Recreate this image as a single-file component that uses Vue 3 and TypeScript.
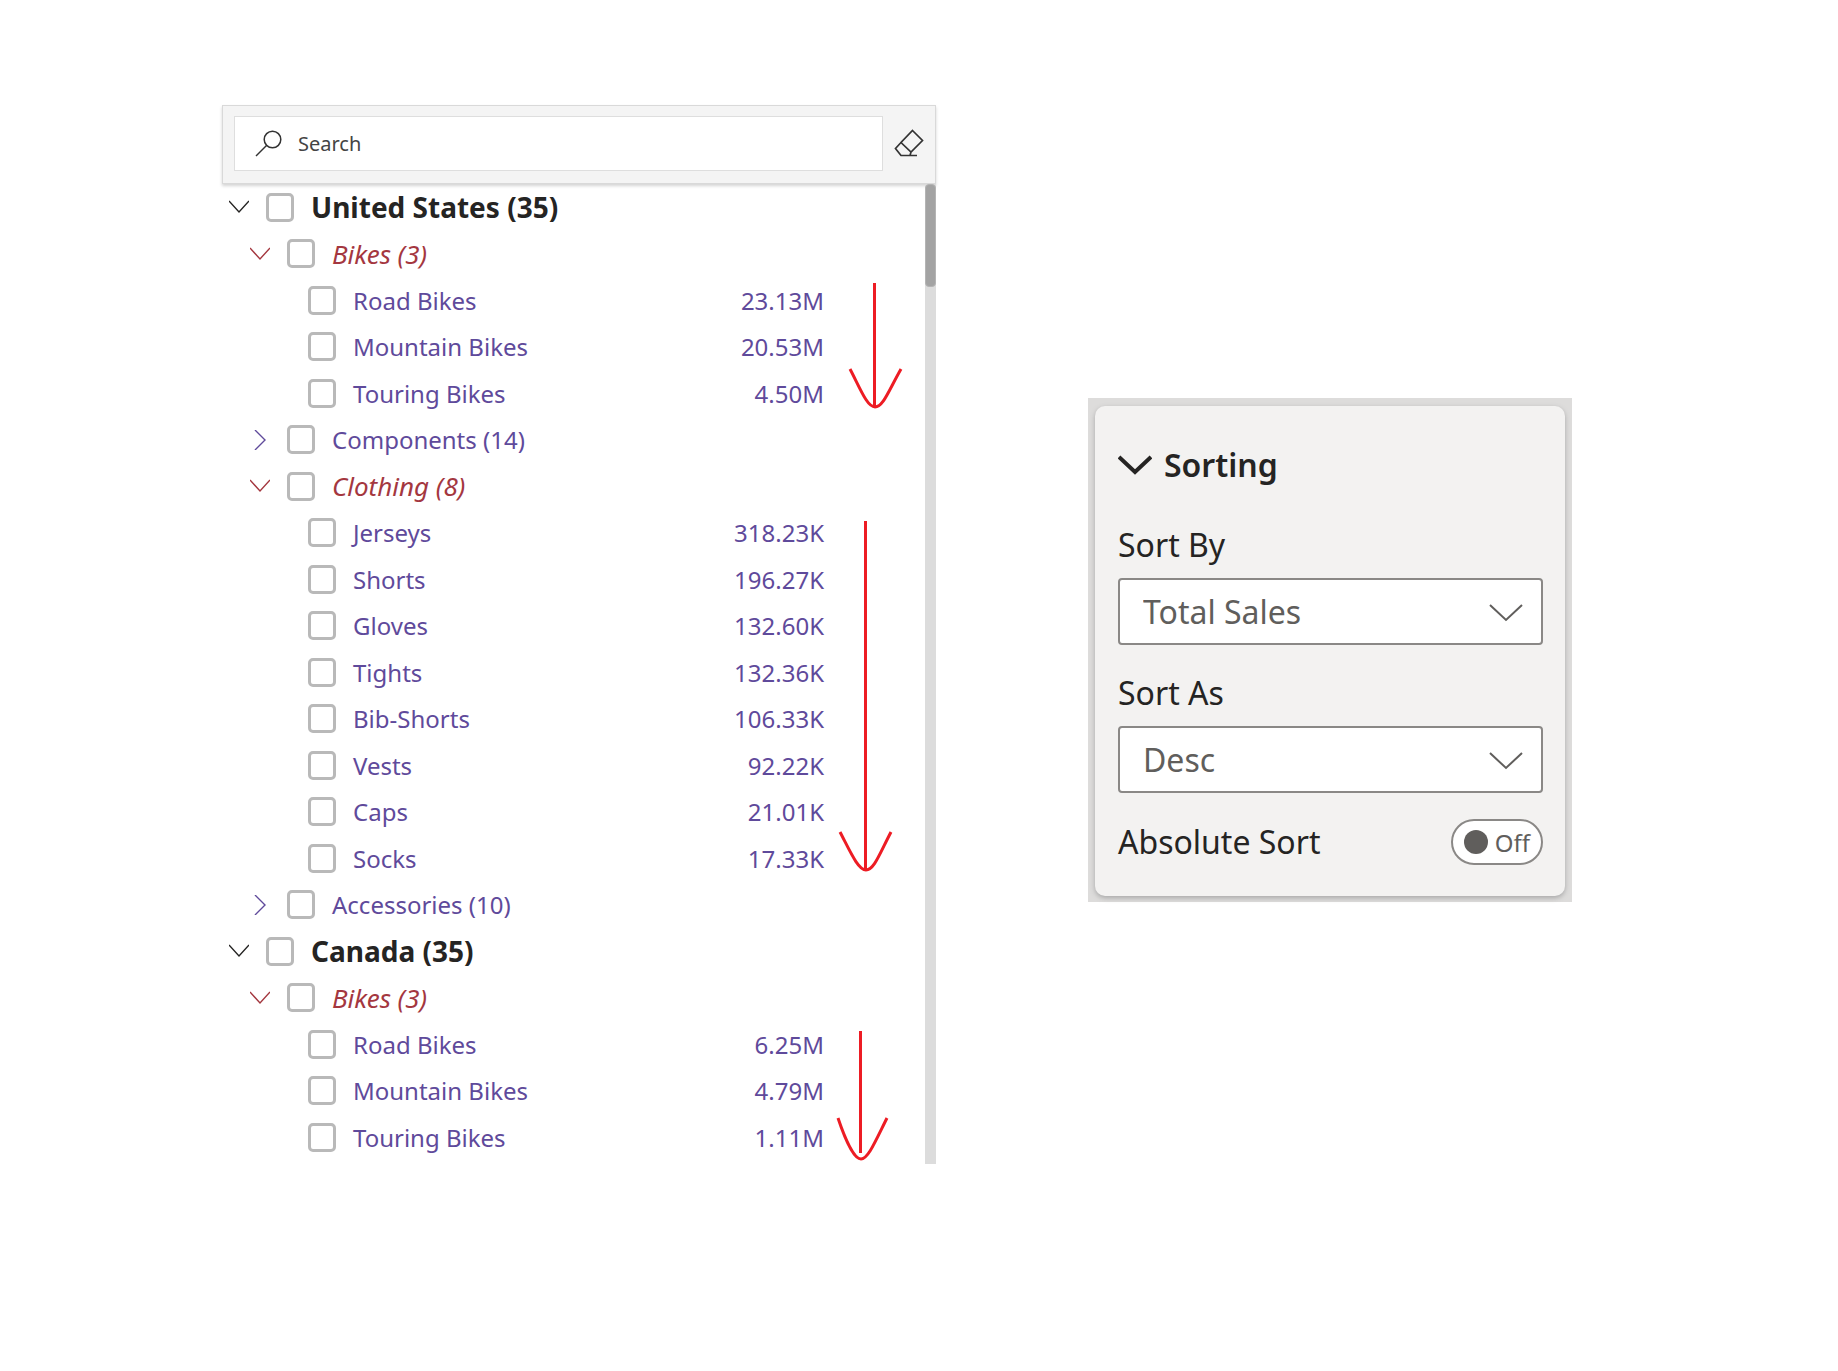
<script setup lang="ts">
import { ref } from 'vue'

interface Row {
  id: string
  level: 0 | 1 | 2
  label: string
  open?: boolean
  value?: string
}

const rows: Row[] = [
  { id: 'us', level: 0, label: 'United States (35)', open: true },
  { id: 'us-bikes', level: 1, label: 'Bikes (3)', open: true },
  { id: 'us-road', level: 2, label: 'Road Bikes', value: '23.13M' },
  { id: 'us-mountain', level: 2, label: 'Mountain Bikes', value: '20.53M' },
  { id: 'us-touring', level: 2, label: 'Touring Bikes', value: '4.50M' },
  { id: 'us-components', level: 1, label: 'Components (14)', open: false },
  { id: 'us-clothing', level: 1, label: 'Clothing (8)', open: true },
  { id: 'us-jerseys', level: 2, label: 'Jerseys', value: '318.23K' },
  { id: 'us-shorts', level: 2, label: 'Shorts', value: '196.27K' },
  { id: 'us-gloves', level: 2, label: 'Gloves', value: '132.60K' },
  { id: 'us-tights', level: 2, label: 'Tights', value: '132.36K' },
  { id: 'us-bib', level: 2, label: 'Bib-Shorts', value: '106.33K' },
  { id: 'us-vests', level: 2, label: 'Vests', value: '92.22K' },
  { id: 'us-caps', level: 2, label: 'Caps', value: '21.01K' },
  { id: 'us-socks', level: 2, label: 'Socks', value: '17.33K' },
  { id: 'us-accessories', level: 1, label: 'Accessories (10)', open: false },
  { id: 'ca', level: 0, label: 'Canada (35)', open: true },
  { id: 'ca-bikes', level: 1, label: 'Bikes (3)', open: true },
  { id: 'ca-road', level: 2, label: 'Road Bikes', value: '6.25M' },
  { id: 'ca-mountain', level: 2, label: 'Mountain Bikes', value: '4.79M' },
  { id: 'ca-touring', level: 2, label: 'Touring Bikes', value: '1.11M' },
]

const query = ref('')
const sortBy = ref('Total Sales')
const sortAs = ref('Desc')
const absolute = ref(false)
</script>

<template>
  <main class="page">
    <section class="slicer">
      <header class="search-bar">
        <label class="search-box">
          <svg class="search-icon" viewBox="0 0 28 28" stroke-width="1.5" aria-hidden="true">
            <circle cx="17.5" cy="9.5" r="8.3" />
            <path d="M11.5 15.5 1 26" />
          </svg>
          <input v-model="query" class="search-input" type="text" placeholder="Search" aria-label="Search" />
        </label>
        <button class="clear" type="button" aria-label="Clear selections">
          <svg viewBox="0 0 30 30" stroke-width="1.7" aria-hidden="true">
            <path d="M18.5 1.500 28.500 11.5 17 23 7 13.5ZM7 13.5 1.5 19.5 7 26.5H23M17 23 16 26.5" />
          </svg>
        </button>
      </header>

      <div class="body">
        <ul class="tree">
          <li
            v-for="row in rows"
            :key="row.id"
            class="row"
            :class="[`level-${row.level}`, { open: row.open }]"
          >
            <button
              v-if="row.level < 2"
              class="toggle"
              type="button"
              :aria-expanded="row.open"
              :aria-label="`Toggle ${row.label}`"
            >
              <svg viewBox="0 0 20 20" stroke-width="1.4" aria-hidden="true">
                <path :d="row.open ? 'M0 4 10 15 20 4' : 'M5 0 15 10 5 20'" />
              </svg>
            </button>
            <input :id="row.id" class="check" type="checkbox" />
            <label class="name" :for="row.id">{{ row.label }}</label>
            <span v-if="row.value" class="value">{{ row.value }}</span>
          </li>
        </ul>
        <div class="scrollbar"><div class="thumb"></div></div>
        <svg class="arrows" viewBox="830 183 80 979" aria-hidden="true">
          <path d="M874.5 282V405M850 368C860 387 867 406 875 406S888 391 901 368" />
          <path d="M865.5 520V868M840 831C850 850 858 869 866 869S879 854 891 831" />
          <path d="M860.5 1030V1152M838 1117C845 1138 854 1158 861 1158S875 1141 887 1117" />
        </svg>
      </div>
    </section>

    <aside class="pane">
      <div class="card">
        <h2 class="title">
          <button class="title-button" type="button" aria-expanded="true">
            <svg class="title-chevron" viewBox="0 0 34 20" aria-hidden="true"><path d="M1 2 17 17 33 2" /></svg>
            <span>Sorting</span>
          </button>
        </h2>

        <label class="caption" for="sort-by">Sort By</label>
        <div class="field">
          <select id="sort-by" v-model="sortBy">
            <option>Total Sales</option>
          </select>
          <svg class="field-chevron" viewBox="0 0 34 20" aria-hidden="true"><path d="M1 2 17 17 33 2" /></svg>
        </div>

        <label class="caption" for="sort-as">Sort As</label>
        <div class="field">
          <select id="sort-as" v-model="sortAs">
            <option>Desc</option>
            <option>Asc</option>
          </select>
          <svg class="field-chevron" viewBox="0 0 34 20" aria-hidden="true"><path d="M1 2 17 17 33 2" /></svg>
        </div>

        <div class="switch-row">
          <label class="switch-caption" for="absolute">Absolute Sort</label>
          <label class="switch">
            <input id="absolute" v-model="absolute" type="checkbox" role="switch" />
            <span>{{ absolute ? 'On' : 'Off' }}</span>
          </label>
        </div>
      </div>
    </aside>
  </main>
</template>

<style>
body {
  background: #fff;
}
</style>

<style scoped>
.page {
  display: grid;
  grid-template-columns: 222fr 714fr 152fr 484fr 266fr;
  align-items: start;
  padding: 105px 0;
  font-family: 'Noto Sans', 'Open Sans', sans-serif;
  color: #252423;
}
.page * {
  box-sizing: border-box;
}
button,
input,
select {
  font: inherit;
  color: inherit;
  margin: 0;
}
button {
  padding: 0;
  border: 0;
  background: none;
  cursor: pointer;
}
svg {
  display: block;
  fill: none;
  stroke: currentColor;
}

.slicer {
  grid-column: 2;
}
.search-bar {
  position: relative;
  display: flex;
  align-items: center;
  gap: 11px;
  height: 79px;
  padding: 0 11px 2px;
  border: 1px solid #d9d9d9;
  background: #f4f4f4;
  box-shadow: 0 2px 3px #d4d4d4;
}
.search-box {
  flex: 1;
  display: flex;
  align-items: center;
  gap: 15px;
  height: 55px;
  padding: 0 20px;
  border: 1px solid #dedede;
  background: #fff;
}
.search-icon {
  width: 28px;
  height: 28px;
  stroke: #333;
}
.search-input {
  flex: 1;
  min-width: 0;
  padding: 0;
  border: 0;
  outline: 0;
  background: none;
  font-size: 20px;
}
.search-input::placeholder {
  color: #444;
  opacity: 1;
}
.clear svg {
  width: 30px;
  height: 30px;
  stroke: #333;
}

.body {
  position: relative;
  display: flex;
}
.tree {
  flex: 1;
  margin: 0;
  padding: 0 101px 4px 0;
  list-style: none;
}
.row {
  display: flex;
  align-items: center;
  height: 46px;
  font-size: 24px;
  color: #5f4a9b;
}
.row:nth-child(even) {
  height: 47px;
}
.level-0 {
  padding-left: 7px;
  font-size: 28px;
  font-weight: 700;
  color: #252423;
}
.level-1 {
  padding-left: 28px;
}
.level-2 {
  padding-left: 86px;
}
.level-1.open {
  font-size: 26px;
  font-style: italic;
  color: #a4373f;
}
.toggle {
  margin-right: 17px;
}
.toggle svg {
  width: 20px;
  height: 20px;
}
.check {
  appearance: none;
  flex: none;
  width: 28px;
  height: 29px;
  margin-right: 17px;
  border: 3px solid #b9b9b9;
  border-radius: 5px;
  background: #fff;
}
.name {
  flex: 1;
}
.scrollbar {
  width: 11px;
  background: #dcdcdc;
}
.thumb {
  height: 103px;
  border: 1px solid #b4b4b4;
  border-radius: 4px;
  background: #a3a3a3;
}
.arrows {
  position: absolute;
  top: 0;
  right: 26px;
  width: 80px;
  height: 979px;
  stroke: #ed1c24;
  stroke-width: 3;
  pointer-events: none;
}

.pane {
  grid-column: 4;
  margin-top: 293px;
  padding: 8px 7px 6px;
  background: #dddcdb;
}
.card {
  padding: 37px 22px 31px 23px;
  border-radius: 10px;
  background: #f3f2f1;
  box-shadow: 0 2px 5px #a8a8a8;
}
.title {
  margin: 0 0 36px;
  font-size: 32px;
  font-weight: 600;
  line-height: 44px;
}
.title-button {
  display: flex;
  align-items: center;
  gap: 12px;
}
.title-chevron {
  width: 34px;
  height: 20px;
  stroke-width: 4;
}
.caption {
  display: block;
  margin-bottom: 11px;
  font-size: 32px;
  line-height: 44px;
}
.field {
  position: relative;
  margin-bottom: 26px;
  color: #605e5c;
}
.field select {
  display: block;
  appearance: none;
  width: 100%;
  height: 67px;
  padding: 0 23px;
  border: 2px solid #8a8886;
  border-radius: 4px;
  background: #fff;
  font-size: 32px;
}
.field-chevron {
  position: absolute;
  right: 20px;
  top: 25px;
  width: 34px;
  height: 20px;
  stroke-width: 2;
  pointer-events: none;
}
.switch-row {
  display: flex;
  align-items: center;
  justify-content: space-between;
}
.switch-caption {
  font-size: 32px;
  line-height: 44px;
}
.switch {
  display: flex;
  align-items: center;
  gap: 7px;
  height: 46px;
  padding: 0 11px;
  border: 2px solid #8a8886;
  border-radius: 23px;
  background: #fff;
  color: #605e5c;
  font-size: 24px;
}
.switch input {
  appearance: none;
  width: 24px;
  height: 24px;
  border-radius: 50%;
  background: #605e5c;
}
</style>
